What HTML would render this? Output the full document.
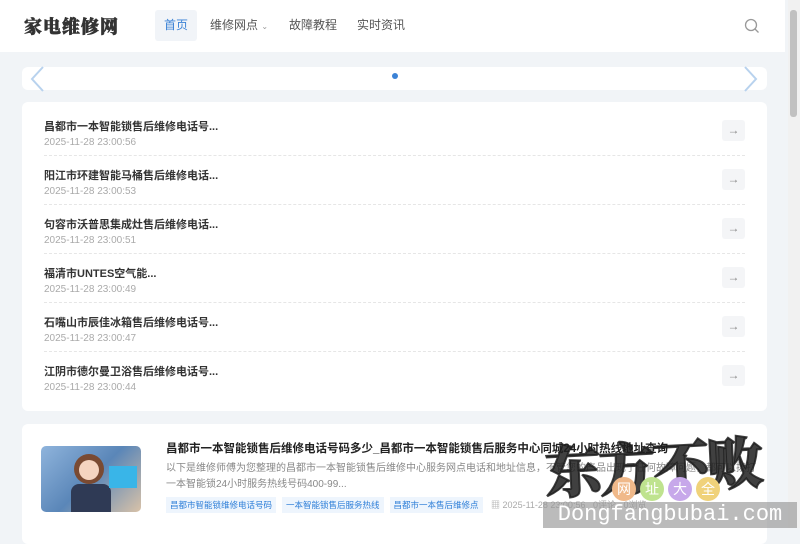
<!DOCTYPE html>
<html><head><meta charset="utf-8"><style>
*{margin:0;padding:0;box-sizing:border-box}
body{width:800px;height:528px;overflow:hidden;background:#f1f4f7;font-family:"Liberation Sans","Noto Sans CJK SC",sans-serif;position:relative}
.hd{position:absolute;left:0;top:0;width:785px;height:52px;background:#fff}
.logo{position:absolute;left:24px;top:13px;font-family:"Noto Serif CJK SC",serif;font-weight:900;font-size:18px;color:#333;letter-spacing:1px;-webkit-text-stroke:0.6px #333}
.nav{position:absolute;top:10px;height:31px;line-height:31px;font-size:12px;color:#555}
.sb{position:absolute;left:788px;top:0;width:12px;height:528px;background:#f1f1f1}
.sb i{position:absolute;left:2px;top:10px;width:7px;height:107px;background:#c1c1c1;border-radius:3px}
.card{position:absolute;left:22px;width:745px;background:#fff;border-radius:6px}
.row{position:absolute;left:22px;width:701px;height:49px;border-bottom:1px dashed #e6e6e6}
.row b{position:absolute;left:0;top:11px;font-size:11px;color:#333}
.row span{position:absolute;left:0;top:30px;font-size:10px;color:#aaa}
.arr{position:absolute;left:678px;top:13px;width:23px;height:21px;background:#f4f5f7;border-radius:3px;color:#888;font-size:12px;text-align:center;line-height:21px}
.tag{display:inline-block;background:#eef5fd;color:#2f7fd8;font-size:8.5px;padding:2px 4px;margin-right:6px}
</style></head><body>
<div class="hd">
<div class="logo">家电维修网</div>
<div class="nav" style="left:155px;width:42px;background:#f1f4f8;color:#3b82d6;text-align:center;border-radius:3px">首页</div>
<div class="nav" style="left:210px">维修网点 <span style="font-size:8px;color:#999">⌄</span></div>
<div class="nav" style="left:289px">故障教程</div>
<div class="nav" style="left:357px">实时资讯</div>
<svg style="position:absolute;left:744px;top:18px" width="16" height="16" viewBox="0 0 16 16"><circle cx="7" cy="7" r="5.5" fill="none" stroke="#999" stroke-width="1.3"/><path d="M11 11l3.5 3.5" stroke="#999" stroke-width="1.3"/></svg>
</div>
<div class="sb"><i></i></div>
<div class="card" style="top:67px;height:23px">
<svg style="position:absolute;left:7px;top:-1px" width="16" height="26"><path d="M14 1L3 13l11 12" fill="none" stroke="#b8d2ee" stroke-width="2"/></svg>
<div style="position:absolute;left:370px;top:6px;width:6px;height:6px;border-radius:50%;background:#3b82d6"></div>
<svg style="position:absolute;left:721px;top:-1px" width="16" height="26"><path d="M2 1l11 12L2 25" fill="none" stroke="#b8d2ee" stroke-width="2"/></svg>
</div>
<div class="card" style="top:102px;height:309px">
<div class="row" style="top:5px"><b>昌都市一本智能锁售后维修电话号...</b><span>2025-11-28 23:00:56</span><div class="arr">→</div></div>
<div class="row" style="top:54px"><b>阳江市环建智能马桶售后维修电话...</b><span>2025-11-28 23:00:53</span><div class="arr">→</div></div>
<div class="row" style="top:103px"><b>句容市沃普思集成灶售后维修电话...</b><span>2025-11-28 23:00:51</span><div class="arr">→</div></div>
<div class="row" style="top:152px"><b>福清市UNTES空气能...</b><span>2025-11-28 23:00:49</span><div class="arr">→</div></div>
<div class="row" style="top:201px"><b>石嘴山市辰佳冰箱售后维修电话号...</b><span>2025-11-28 23:00:47</span><div class="arr">→</div></div>
<div class="row" style="top:250px;border:none"><b>江阴市德尔曼卫浴售后维修电话号...</b><span>2025-11-28 23:00:44</span><div class="arr">→</div></div>
</div>
<div class="card" style="top:424px;height:120px">
<div style="position:absolute;left:19px;top:22px;width:100px;height:66px;border-radius:5px;background:linear-gradient(135deg,#8fb4dc,#5a86b8 50%,#d9c2a8);overflow:hidden">
<div style="position:absolute;left:33px;top:8px;width:30px;height:30px;border-radius:50%;background:#7a4a32"></div>
<div style="position:absolute;left:38px;top:14px;width:20px;height:20px;border-radius:50%;background:#f5d4c0"></div>
<div style="position:absolute;left:30px;top:38px;width:40px;height:30px;background:#2f3a55;border-radius:8px 8px 0 0"></div>
<div style="position:absolute;left:68px;top:20px;width:28px;height:22px;background:#39b5e8"></div>
</div>
<div style="position:absolute;left:144px;top:16px;font-size:11.5px;font-weight:bold;color:#222">昌都市一本智能锁售后维修电话号码多少_昌都市一本智能锁售后服务中心同城24小时热线地址查询</div>
<div style="position:absolute;left:144px;top:37px;width:590px;font-size:10px;line-height:16px;color:#888">以下是维修师傅为您整理的昌都市一本智能锁售后维修中心服务网点电话和地址信息，不管您的产品出现了任何故障问题，都可以拨打一本智能锁24小时服务热线号码400-99...</div>
<div style="position:absolute;left:144px;top:73px;font-size:9px;color:#aaa;white-space:nowrap"><span class="tag">昌都市智能锁维修电话号码</span><span class="tag">一本智能锁售后服务热线</span><span class="tag">昌都市一本售后维修点</span> ▦ 2025-11-28 23:00:56 &nbsp; 0评论 &nbsp; 0浏览</div>
</div>
<div style="position:absolute;left:545px;top:425px;font-family:'Noto Serif CJK SC',serif;font-weight:900;font-size:56px;color:rgba(30,30,30,.85);letter-spacing:-2px;transform:rotate(-3deg);-webkit-text-stroke:2px rgba(30,30,30,.85)">东方不败</div>
<div style="position:absolute;left:612px;top:477px;width:24px;height:24px;border-radius:50%;background:#f0b98a;color:#fff;font-size:14px;text-align:center;line-height:24px">网</div>
<div style="position:absolute;left:640px;top:477px;width:24px;height:24px;border-radius:50%;background:#bfe38f;color:#fff;font-size:14px;text-align:center;line-height:24px">址</div>
<div style="position:absolute;left:668px;top:477px;width:24px;height:24px;border-radius:50%;background:#c7a8ea;color:#fff;font-size:14px;text-align:center;line-height:24px">大</div>
<div style="position:absolute;left:696px;top:477px;width:24px;height:24px;border-radius:50%;background:#f0d27a;color:#fff;font-size:14px;text-align:center;line-height:24px">全</div>
<div style="position:absolute;left:543px;top:502px;width:254px;height:26px;background:rgba(150,150,150,.65);color:#fff;font-family:'Liberation Mono',monospace;font-size:22px;line-height:26px;text-align:center">Dongfangbubai.com</div>
</body></html>
